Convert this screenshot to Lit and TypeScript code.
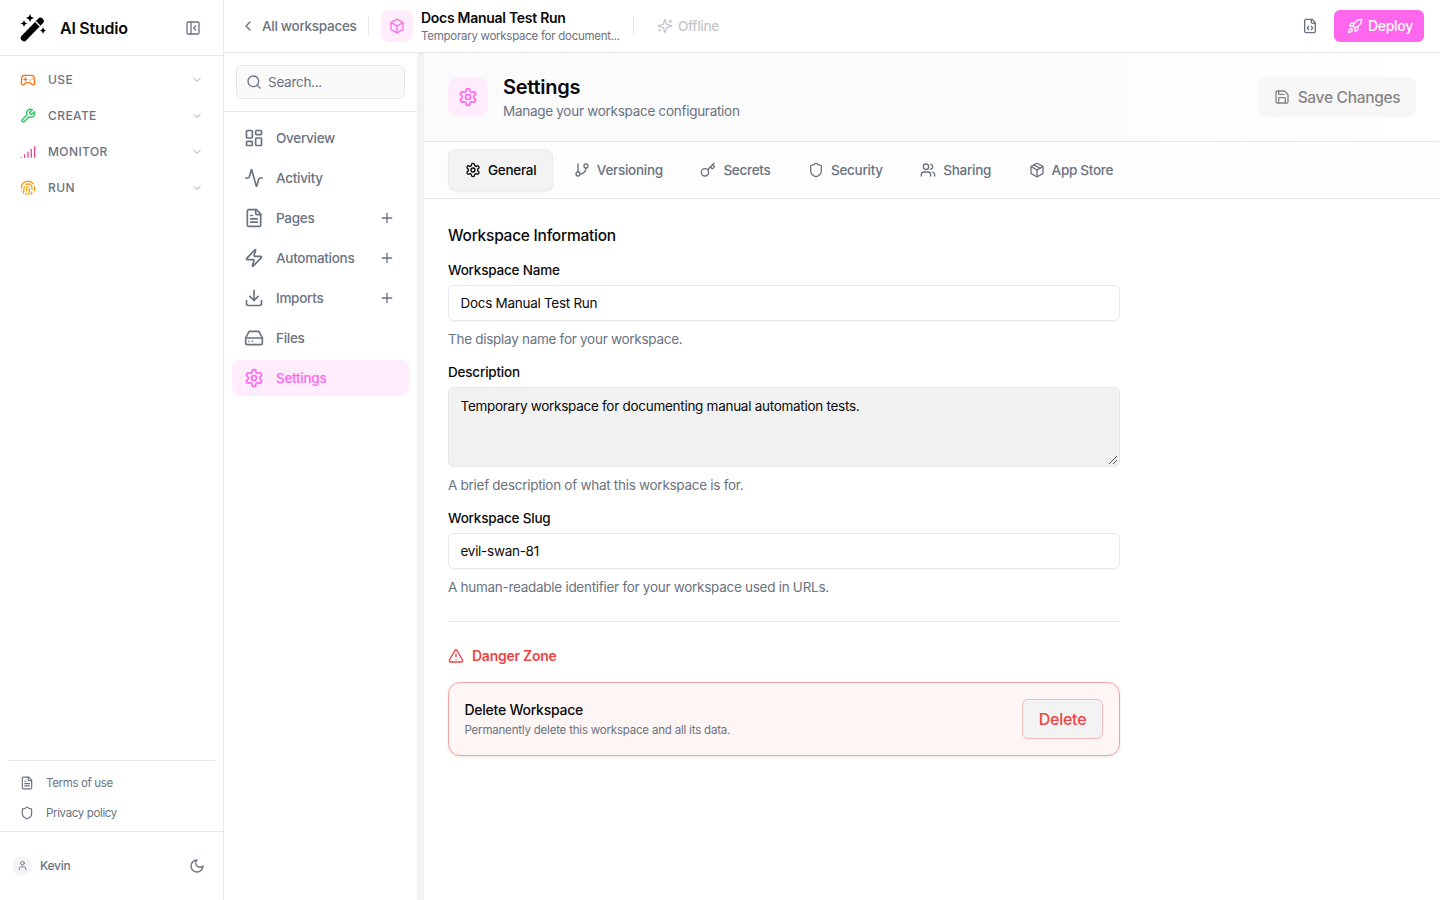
import { html, svg, css, LitElement } from "lit"
import { customElement } from "lit/decorators.js"

const icons = {
  panel: svg`<rect width="18" height="18" x="3" y="3" rx="2"/><path d="M9 3v18"/><path d="m16 15-3-3 3-3"/>`,
  gamepad: svg`<line x1="6" x2="10" y1="11" y2="11"/><line x1="8" x2="8" y1="9" y2="13"/><line x1="15" x2="15.01" y1="12" y2="12"/><line x1="18" x2="18.01" y1="10" y2="10"/><path d="M17.32 5H6.68a4 4 0 0 0-3.978 3.59c-.006.052-.01.101-.017.152C2.604 9.416 2 14.456 2 16a3 3 0 0 0 3 3c1 0 1.5-.5 2-1l1.414-1.414A2 2 0 0 1 9.828 16h4.344a2 2 0 0 1 1.414.586L17 18c.5.5 1 1 2 1a3 3 0 0 0 3-3c0-1.545-.604-6.584-.685-7.258-.007-.05-.011-.1-.017-.151A4 4 0 0 0 17.32 5z"/>`,
  wrench: svg`<path d="M14.7 6.3a1 1 0 0 0 0 1.4l1.6 1.6a1 1 0 0 0 1.4 0l3.77-3.77a6 6 0 0 1-7.94 7.94l-6.91 6.91a2.12 2.12 0 0 1-3-3l6.91-6.91a6 6 0 0 1 7.94-7.94l-3.76 3.76z"/>`,
  signal: svg`<path d="M2 20h.01"/><path d="M7 20v-4"/><path d="M12 20v-8"/><path d="M17 20V8"/><path d="M22 4v16"/>`,
  fingerprint: svg`<path d="M12 10a2 2 0 0 0-2 2c0 1.02-.1 2.51-.26 4"/><path d="M14 13.12c0 2.38 0 6.38-1 8.88"/><path d="M17.29 21.02c.12-.6.43-2.3.5-3.02"/><path d="M2 12a10 10 0 0 1 18-6"/><path d="M2 16h.01"/><path d="M21.8 16c.2-2 .131-5.354 0-6"/><path d="M5 19.5C5.5 18 6 15 6 12a6 6 0 0 1 .34-2"/><path d="M8.65 22c.21-.66.45-1.32.57-2"/><path d="M9 6.8a6 6 0 0 1 9 5.2v2"/>`,
  chevronDown: svg`<path d="m6 9 6 6 6-6"/>`,
  chevronLeft: svg`<path d="m15 18-6-6 6-6"/>`,
  box: svg`<path d="M21 8a2 2 0 0 0-1-1.73l-7-4a2 2 0 0 0-2 0l-7 4A2 2 0 0 0 3 8v8a2 2 0 0 0 1 1.73l7 4a2 2 0 0 0 2 0l7-4A2 2 0 0 0 21 16Z"/><path d="m3.3 7 8.7 5 8.7-5"/><path d="M12 22V12"/>`,
  sparkles: svg`<path d="M9.937 15.5A2 2 0 0 0 8.5 14.063l-6.135-1.582a.5.5 0 0 1 0-.962L8.5 9.936A2 2 0 0 0 9.937 8.5l1.582-6.135a.5.5 0 0 1 .963 0L14.063 8.5A2 2 0 0 0 15.5 9.937l6.135 1.581a.5.5 0 0 1 0 .964L15.5 14.063a2 2 0 0 0-1.437 1.437l-1.582 6.135a.5.5 0 0 1-.963 0z"/><path d="M20 3v4"/><path d="M22 5h-4"/><path d="M4 17v2"/><path d="M5 18H3"/>`,
  fileCode: svg`<path d="M10 12.5 8 15l2 2.5"/><path d="m14 12.5 2 2.5-2 2.5"/><path d="M14 2v4a2 2 0 0 0 2 2h4"/><path d="M15 2H6a2 2 0 0 0-2 2v16a2 2 0 0 0 2 2h12a2 2 0 0 0 2-2V7z"/>`,
  rocket: svg`<path d="M4.5 16.5c-1.5 1.26-2 5-2 5s3.74-.5 5-2c.71-.84.7-2.13-.09-2.91a2.18 2.18 0 0 0-2.91-.09z"/><path d="m12 15-3-3a22 22 0 0 1 2-3.95A12.88 12.88 0 0 1 22 2c0 2.72-.78 7.5-6 11a22.35 22.35 0 0 1-4 2z"/><path d="M9 12H4s.55-3.03 2-4c1.62-1.08 5 0 5 0"/><path d="M12 15v5s3.03-.55 4-2c1.08-1.62 0-5 0-5"/>`,
  search: svg`<circle cx="11" cy="11" r="8"/><path d="m21 21-4.3-4.3"/>`,
  overview: svg`<rect width="7" height="9" x="3" y="3" rx="1"/><rect width="7" height="5" x="14" y="3" rx="1"/><rect width="7" height="9" x="14" y="12" rx="1"/><rect width="7" height="5" x="3" y="16" rx="1"/>`,
  activity: svg`<path d="M22 12h-2.48a2 2 0 0 0-1.93 1.46l-2.35 8.36a.25.25 0 0 1-.48 0L9.24 2.18a.25.25 0 0 0-.48 0l-2.35 8.36A2 2 0 0 1 4.49 12H2"/>`,
  fileText: svg`<path d="M15 2H6a2 2 0 0 0-2 2v16a2 2 0 0 0 2 2h12a2 2 0 0 0 2-2V7Z"/><path d="M14 2v4a2 2 0 0 0 2 2h4"/><path d="M10 9H8"/><path d="M16 13H8"/><path d="M16 17H8"/>`,
  zap: svg`<path d="M4 14a1 1 0 0 1-.78-1.63l9.9-10.2a.5.5 0 0 1 .86.46l-1.92 6.02A1 1 0 0 0 13 10h7a1 1 0 0 1 .78 1.63l-9.9 10.2a.5.5 0 0 1-.86-.46l1.92-6.02A1 1 0 0 0 11 14z"/>`,
  download: svg`<path d="M21 15v4a2 2 0 0 1-2 2H5a2 2 0 0 1-2-2v-4"/><polyline points="7 10 12 15 17 10"/><line x1="12" x2="12" y1="15" y2="3"/>`,
  drive: svg`<line x1="22" x2="2" y1="12" y2="12"/><path d="M5.45 5.11 2 12v6a2 2 0 0 0 2 2h16a2 2 0 0 0 2-2v-6l-3.45-6.89A2 2 0 0 0 16.76 4H7.24a2 2 0 0 0-1.79 1.11z"/><line x1="6" x2="6.01" y1="16" y2="16"/><line x1="10" x2="10.01" y1="16" y2="16"/>`,
  settings: svg`<path d="M12.22 2h-.44a2 2 0 0 0-2 2v.18a2 2 0 0 1-1 1.73l-.43.25a2 2 0 0 1-2 0l-.15-.08a2 2 0 0 0-2.73.73l-.22.38a2 2 0 0 0 .73 2.73l.15.1a2 2 0 0 1 1 1.72v.51a2 2 0 0 1-1 1.74l-.15.09a2 2 0 0 0-.73 2.73l.22.38a2 2 0 0 0 2.73.73l.15-.08a2 2 0 0 1 2 0l.43.25a2 2 0 0 1 1 1.73V20a2 2 0 0 0 2 2h.44a2 2 0 0 0 2-2v-.18a2 2 0 0 1 1-1.73l.43-.25a2 2 0 0 1 2 0l.15.08a2 2 0 0 0 2.73-.73l.22-.39a2 2 0 0 0-.73-2.73l-.15-.08a2 2 0 0 1-1-1.74v-.5a2 2 0 0 1 1-1.74l.15-.09a2 2 0 0 0 .73-2.73l-.22-.38a2 2 0 0 0-2.73-.73l-.15.08a2 2 0 0 1-2 0l-.43-.25a2 2 0 0 1-1-1.73V4a2 2 0 0 0-2-2z"/><circle cx="12" cy="12" r="3"/>`,
  branch: svg`<line x1="6" x2="6" y1="3" y2="15"/><circle cx="18" cy="6" r="3"/><circle cx="6" cy="18" r="3"/><path d="M18 9a9 9 0 0 1-9 9"/>`,
  key: svg`<path d="m15.5 7.5 2.3 2.3a1 1 0 0 0 1.4 0l2.1-2.1a1 1 0 0 0 0-1.4L19 4"/><path d="m21 2-9.6 9.6"/><circle cx="7.5" cy="15.5" r="5.5"/>`,
  shield: svg`<path d="M20 13c0 5-3.5 7.5-7.66 8.95a1 1 0 0 1-.67-.01C7.5 20.5 4 18 4 13V6a1 1 0 0 1 1-1c2 0 4.5-1.2 6.24-2.72a1.17 1.17 0 0 1 1.52 0C14.51 3.81 17 5 19 5a1 1 0 0 1 1 1z"/>`,
  users: svg`<path d="M16 21v-2a4 4 0 0 0-4-4H6a4 4 0 0 0-4 4v2"/><circle cx="9" cy="7" r="4"/><path d="M22 21v-2a4 4 0 0 0-3-3.87"/><path d="M16 3.13a4 4 0 0 1 0 7.75"/>`,
  pkg: svg`<path d="M11 21.73a2 2 0 0 0 2 0l7-4A2 2 0 0 0 21 16V8a2 2 0 0 0-1-1.73l-7-4a2 2 0 0 0-2 0l-7 4A2 2 0 0 0 3 8v8a2 2 0 0 0 1 1.73z"/><path d="M12 22V12"/><path d="m3.3 7 8.7 5 8.7-5"/><path d="m7.5 4.27 9 5.15"/>`,
  save: svg`<path d="M15.2 3a2 2 0 0 1 1.4.6l3.8 3.8a2 2 0 0 1 .6 1.4V19a2 2 0 0 1-2 2H5a2 2 0 0 1-2-2V5a2 2 0 0 1 2-2z"/><path d="M17 21v-7a1 1 0 0 0-1-1H8a1 1 0 0 0-1 1v7"/><path d="M7 3v4a1 1 0 0 0 1 1h7"/>`,
  alert: svg`<path d="m21.73 18-8-14a2 2 0 0 0-3.48 0l-8 14A2 2 0 0 0 4 21h16a2 2 0 0 0 1.73-3"/><path d="M12 9v4"/><path d="M12 17h.01"/>`,
  user: svg`<path d="M19 21v-2a4 4 0 0 0-4-4H9a4 4 0 0 0-4 4v2"/><circle cx="12" cy="7" r="4"/>`,
  moon: svg`<path d="M12 3a6 6 0 0 0 9 9 9 9 0 1 1-9-9Z"/>`,
  plus: svg`<path d="M5 12h14"/><path d="M12 5v14"/>`,
}

type IconName = keyof typeof icons

const icon = (name: IconName, size = 16, sw = 2) => html`<svg
  width=${size}
  height=${size}
  viewBox="0 0 24 24"
  fill="none"
  stroke="currentColor"
  stroke-width=${sw}
  stroke-linecap="round"
  stroke-linejoin="round"
>${icons[name]}</svg>`

const groups: { label: string; icon: IconName; color: string }[] = [
  { label: "USE", icon: "gamepad", color: "#f97316" },
  { label: "CREATE", icon: "wrench", color: "#22c55e" },
  { label: "MONITOR", icon: "signal", color: "#ec4899" },
  { label: "RUN", icon: "fingerprint", color: "#f59e0b" },
]

const pages: { label: string; icon: IconName; add?: boolean; active?: boolean }[] = [
  { label: "Overview", icon: "overview" },
  { label: "Activity", icon: "activity" },
  { label: "Pages", icon: "fileText", add: true },
  { label: "Automations", icon: "zap", add: true },
  { label: "Imports", icon: "download", add: true },
  { label: "Files", icon: "drive" },
  { label: "Settings", icon: "settings", active: true },
]

const tabs: { label: string; icon: IconName; active?: boolean }[] = [
  { label: "General", icon: "settings", active: true },
  { label: "Versioning", icon: "branch" },
  { label: "Secrets", icon: "key" },
  { label: "Security", icon: "shield" },
  { label: "Sharing", icon: "users" },
  { label: "App Store", icon: "pkg" },
]

@customElement("app-root")
export class AppRoot extends LitElement {
  static styles = css`
    :host {
      display: flex;
      width: 1440px;
      height: 900px;
      overflow: hidden;
      background: #fff;
      color: #0a0a0a;
      font-family: Inter, "Liberation Sans", sans-serif;
      font-size: 13.5px;
      letter-spacing: -0.28px;
    }
    svg {
      display: block;
      flex: none;
    }
    .rail {
      width: 224px;
      flex: none;
      box-sizing: border-box;
      border-right: 1px solid #e5e7eb;
      display: flex;
      flex-direction: column;
    }
    .brand {
      height: 56px;
      box-sizing: border-box;
      border-bottom: 1px solid #e5e7eb;
      display: flex;
      align-items: center;
      padding: 0 22px 0 20px;
    }
    .brand b {
      font-size: 16px;
      font-weight: 600;
      letter-spacing: -0.25px;
      margin-left: 14px;
      flex: 1;
    }
    .brand .collapse {
      color: #6b7280;
    }
    .groups {
      padding-top: 6px;
      flex: 1;
    }
    .group {
      height: 36px;
      display: flex;
      align-items: center;
      padding: 0 20px;
      gap: 12px;
      font-size: 12px;
      font-weight: 500;
      letter-spacing: 0.4px;
      color: #6b7280;
      line-height: 15px;
    }
    .group span {
      flex: 1;
      margin-top: -1px;
    }
    .group .chev {
      color: #9ca3af;
    }
    .legal {
      margin: 0 8px;
      border-top: 1px solid #e5e7eb;
      padding: 7px 0 3px;
    }
    .legal div {
      height: 30px;
      display: flex;
      align-items: center;
      gap: 12px;
      padding-left: 12px;
      font-size: 11.5px;
      letter-spacing: -0.35px;
      color: #6b7280;
    }
    .user {
      height: 69px;
      box-sizing: border-box;
      border-top: 1px solid #e5e7eb;
      display: flex;
      align-items: center;
      padding: 0 18px 1px 12px;
      font-size: 12px;
      font-weight: 500;
      color: #6b7280;
    }
    .avatar {
      width: 20px;
      height: 20px;
      border-radius: 50%;
      background: #f3f4f6;
      display: grid;
      place-items: center;
      margin-right: 8px;
    }
    .user span {
      flex: 1;
    }
    .right {
      flex: 1;
      min-width: 0;
      display: flex;
      flex-direction: column;
    }
    .top {
      height: 53px;
      flex: none;
      box-sizing: border-box;
      border-bottom: 1px solid #e5e7eb;
      display: flex;
      align-items: center;
      padding: 0 16px;
    }
    .back {
      width: 116px;
      white-space: nowrap;
      display: flex;
      align-items: center;
      gap: 6px;
      font-weight: 500;
      color: #6b7280;
    }
    .sep {
      width: 1px;
      height: 20px;
      background: #e5e7eb;
    }
    .tile {
      display: grid;
      place-items: center;
      background: #ffecfd;
      color: #ff66ee;
    }
    .top .tile {
      width: 32px;
      height: 32px;
      border-radius: 8px;
      margin: 0 8px 0 12px;
    }
    .ws {
      width: 212px;
      padding-top: 2px;
    }
    .ws b {
      display: block;
      font-size: 14px;
      font-weight: 600;
      line-height: 18px;
      letter-spacing: -0.28px;
    }
    .ws small {
      display: block;
      font-size: 11.5px;
      line-height: 18px;
      color: #6b7280;
      letter-spacing: -0.27px;
    }
    .offline {
      display: flex;
      align-items: center;
      gap: 5px;
      margin-left: 23px;
      font-weight: 500;
      color: #c4c7cd;
      flex: 1;
    }
    .code {
      color: #6b7280;
      margin-right: 16px;
    }
    .deploy {
      width: 90px;
      height: 32px;
      box-sizing: border-box;
      padding: 0 0 1px 2px;
      border-radius: 6px;
      background: #ff66ee;
      color: #fff;
      display: flex;
      align-items: center;
      justify-content: center;
      gap: 5px;
      font-size: 14px;
      font-weight: 500;
    }
    .body {
      flex: 1;
      display: flex;
      min-height: 0;
    }
    .pages {
      width: 193px;
      flex: none;
    }
    .searchwrap {
      height: 59px;
      box-sizing: border-box;
      border-bottom: 1px solid #e5e7eb;
      padding: 12px 12px 0;
    }
    .search {
      height: 34px;
      box-sizing: border-box;
      border: 1px solid #e5e7eb;
      border-radius: 6px;
      background: #fafafa;
      display: flex;
      align-items: center;
      gap: 6px;
      padding-left: 9px;
      color: #6b7280;
    }
    .list {
      padding: 8px 8px;
    }
    .page {
      height: 36px;
      margin-bottom: 4px;
      border-radius: 8px;
      display: flex;
      align-items: center;
      gap: 12px;
      padding: 0 14px 0 12px;
      font-weight: 500;
      color: #6b7280;
    }
    .page span {
      flex: 1;
    }
    .page.active {
      background: #ffecfd;
      color: #ff66ee;
    }
    .gutter {
      width: 7px;
      flex: none;
      background: #f0f1f4;
    }
    .main {
      flex: 1;
      min-width: 0;
    }
    .head {
      height: 89px;
      box-sizing: border-box;
      border-bottom: 1px solid #e5e7eb;
      background: linear-gradient(90deg, #fbfbfc 0%, #fcfcfd 60%, #ffffff 100%);
      display: flex;
      align-items: center;
      padding: 0 24px;
    }
    .head .tile {
      width: 40px;
      height: 40px;
      border-radius: 10px;
      margin-right: 15px;
    }
    .head h1 {
      margin: 0;
      font-size: 20px;
      font-weight: 600;
      line-height: 24px;
      letter-spacing: -0.25px;
    }
    .head p {
      margin: 0;
      line-height: 24px;
      color: #6b7280;
    }
    .titles {
      flex: 1;
      padding-top: 4px;
    }
    .save {
      width: 158px;
      height: 40px;
      border-radius: 8px;
      background: #f7f7f8;
      color: #858585;
      display: flex;
      align-items: center;
      justify-content: center;
      gap: 8px;
      font-size: 15.5px;
      letter-spacing: -0.3px;
      font-weight: 500;
    }
    .tabs {
      height: 57px;
      box-sizing: border-box;
      border-bottom: 1px solid #e5e7eb;
      background: #fdfdfd;
      display: flex;
      align-items: center;
      gap: 3.5px;
      padding: 0 24px;
    }
    .tab {
      height: 42px;
      box-sizing: border-box;
      display: flex;
      align-items: center;
      gap: 7px;
      padding: 0 16px 1px;
      border: 1px solid transparent;
      border-radius: 8px;
      color: #6b7280;
      font-weight: 500;
    }
    .tab.active {
      background: #f3f3f4;
      border-color: #ebebec;
      color: #0a0a0a;
      box-shadow: 0 1px 2px rgba(0, 0, 0, 0.06);
    }
    .form {
      width: 672px;
      padding: 24px 24px 0;
    }
    .form h2 {
      margin: 1px 0 -1px;
      font-size: 15.5px;
      font-weight: 500;
      line-height: 24px;
      letter-spacing: -0.25px;
    }
    label {
      display: block;
      font-weight: 500;
      line-height: 20px;
      letter-spacing: -0.2px;
      margin-top: 13px;
      margin-bottom: 5px;
    }
    .field {
      height: 36px;
      box-sizing: border-box;
      border: 1px solid #e5e7eb;
      border-radius: 6px;
      background: #fff;
      display: flex;
      align-items: center;
      padding: 0 11.5px;
      box-shadow: 0 1px 1px rgba(0, 0, 0, 0.03);
    }
    .area {
      position: relative;
      height: 80px;
      box-sizing: border-box;
      border: 1px solid #e5e7eb;
      border-radius: 6px;
      background: #f2f2f2;
      padding: 8px 11.5px;
      line-height: 20px;
    }
    .grip {
      position: absolute;
      right: 1px;
      bottom: 1px;
      color: #555;
    }
    .help {
      margin: 8px 0 0;
      line-height: 20px;
      color: #6b7280;
    }
    hr {
      border: none;
      border-top: 1px solid #e5e7eb;
      margin: 24px 0 0;
    }
    .danger {
      display: flex;
      align-items: center;
      gap: 8px;
      margin-top: 24px;
      line-height: 20px;
      font-size: 14px;
      letter-spacing: -0.25px;
      font-weight: 600;
      color: #ef4444;
    }
    .card {
      height: 74px;
      box-sizing: border-box;
      margin-top: 16px;
      border: 1px solid #f2a3a3;
      border-radius: 12px;
      background: #fef5f5;
      box-shadow: 0 1px 3px rgba(0, 0, 0, 0.1);
      display: flex;
      align-items: center;
      padding: 0 16px 0 15.5px;
    }
    .card div.txt {
      flex: 1;
      padding-top: 2px;
    }
    .card b {
      display: block;
      font-size: 14px;
      font-weight: 500;
      line-height: 20px;
      letter-spacing: -0.25px;
    }
    .card small {
      display: block;
      font-size: 11.5px;
      line-height: 20px;
      color: #6b7280;
      letter-spacing: -0.2px;
    }
    .del {
      width: 81px;
      height: 40px;
      box-sizing: border-box;
      border: 1px solid #f3bcbc;
      border-radius: 6px;
      background: #f3f3f3;
      color: #ef4444;
      display: grid;
      place-items: center;
      font-size: 16px;
      letter-spacing: -0.25px;
      font-weight: 500;
    }
  `

  render() {
    return html`
      <aside class="rail">
        <div class="brand">
          <svg width="26" height="28" viewBox="0 0 26 28">
            <path d="M4 24 20.5 7" stroke="#000" stroke-width="6.5" stroke-linecap="round" />
            <path d="M15.5 7.5 20 12" stroke="#fff" stroke-width="1.3" />
            <path d="M10 0l1.2 2.8L14 4l-2.8 1.2L10 8 8.800 5.200 6 4l2.800-1.200zM4 6l1 2.500L7.500 9.500 5 10.500 4 13l-1-2.500L.5 9.500 3 8.500zM23 13l1 2.500 2 1-2 1-1 2.500-1-2.500-2-1 2-1z" fill="#000" />
          </svg>
          <b>AI Studio</b>
          <span class="collapse">${icon("panel", 16, 2)}</span>
        </div>
        <div class="groups">
          ${groups.map(
            (g) => html`<div class="group">
              <i style="color:${g.color}">${icon(g.icon, 16, 2)}</i>
              <span>${g.label}</span>
              <i class="chev">${icon("chevronDown", 12, 2)}</i>
            </div>`
          )}
        </div>
        <div class="legal">
          <div>${icon("fileText", 14, 2)}<span>Terms of use</span></div>
          <div>${icon("shield", 14, 2)}<span>Privacy policy</span></div>
        </div>
        <div class="user">
          <div class="avatar">${icon("user", 11, 2)}</div>
          <span>Kevin</span>
          ${icon("moon", 16, 2)}
        </div>
      </aside>
      <div class="right">
        <header class="top">
          <div class="back">${icon("chevronLeft", 16, 2)}<span>All workspaces</span></div>
          <div class="sep" style="margin-left:12px"></div>
          <div class="tile">${icon("box", 16, 2)}</div>
          <div class="ws">
            <b>Docs Manual Test Run</b>
            <small>Temporary workspace for document...</small>
          </div>
          <div class="sep"></div>
          <div class="offline">${icon("sparkles", 16, 2)}<span>Offline</span></div>
          <span class="code">${icon("fileCode", 16, 2)}</span>
          <div class="deploy">${icon("rocket", 16, 2)}<span>Deploy</span></div>
        </header>
        <div class="body">
          <nav class="pages">
            <div class="searchwrap">
              <div class="search">${icon("search", 16, 2)}<span>Search...</span></div>
            </div>
            <div class="list">
              ${pages.map(
                (p) => html`<div class="page ${p.active ? "active" : ""}">
                  ${icon(p.icon, 20, 2)}
                  <span>${p.label}</span>
                  ${p.add ? icon("plus", 16, 2) : ""}
                </div>`
              )}
            </div>
          </nav>
          <div class="gutter"></div>
          <main class="main">
            <div class="head">
              <div class="tile">${icon("settings", 20, 2)}</div>
              <div class="titles">
                <h1>Settings</h1>
                <p>Manage your workspace configuration</p>
              </div>
              <div class="save">${icon("save", 16, 2)}<span>Save Changes</span></div>
            </div>
            <div class="tabs">
              ${tabs.map(
                (t) => html`<div class="tab ${t.active ? "active" : ""}">
                  ${icon(t.icon, 16, 2)}<span>${t.label}</span>
                </div>`
              )}
            </div>
            <div class="form">
              <h2>Workspace Information</h2>
              <label>Workspace Name</label>
              <div class="field">Docs Manual Test Run</div>
              <p class="help">The display name for your workspace.</p>
              <label>Description</label>
              <div class="area">
                Temporary workspace for documenting manual automation tests.
                <svg class="grip" width="10" height="10" viewBox="0 0 10 10">
                  <path d="M1 9 9 1M5 9 9 5" stroke="currentColor" stroke-width="1" />
                </svg>
              </div>
              <p class="help">A brief description of what this workspace is for.</p>
              <label>Workspace Slug</label>
              <div class="field">evil-swan-81</div>
              <p class="help">A human-readable identifier for your workspace used in URLs.</p>
              <hr />
              <div class="danger">${icon("alert", 16, 2)}<span>Danger Zone</span></div>
              <div class="card">
                <div class="txt">
                  <b>Delete Workspace</b>
                  <small>Permanently delete this workspace and all its data.</small>
                </div>
                <div class="del">Delete</div>
              </div>
            </div>
          </main>
        </div>
      </div>
    `
  }
}

declare global {
  interface HTMLElementTagNameMap {
    "app-root": HTMLElement
  }
}
